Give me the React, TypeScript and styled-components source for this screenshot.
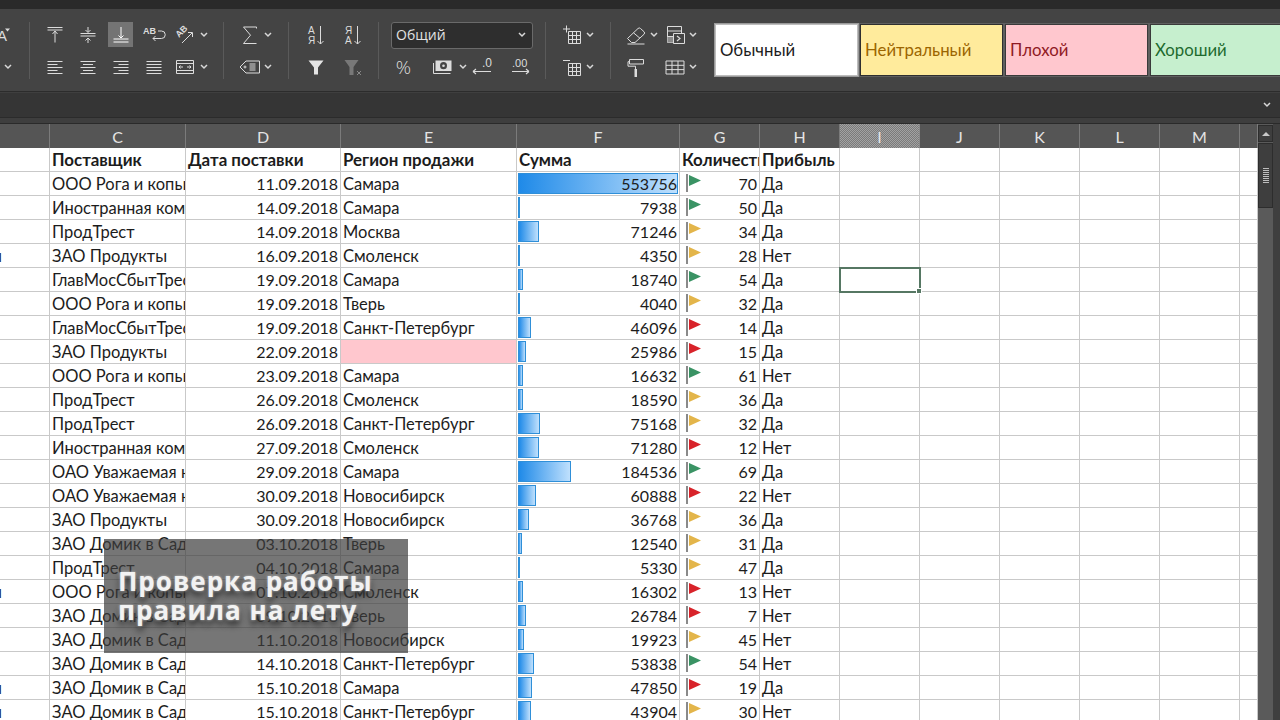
import React from 'react';
import styled, { createGlobalStyle } from 'styled-components';

const GlobalStyle = createGlobalStyle`
  html, body {
    margin: 0;
    height: 720px;
    overflow: hidden;
    background: #3f3f3f;
    font-family: 'Lato', 'Open Sans', 'Liberation Sans', sans-serif;
  }
`;

const COLUMNS = '50px 136px 155px 176px 163px 80px 80px 80px 80px 80px 80px 80px 18px';
const MAX_SUM = 553756;

type Flag = 'g' | 'y' | 'r';
type Row = [string, string, string, string, number, number, Flag, string];

const rows: Row[] = [
  ['', 'ООО Рога и копыта', '11.09.2018', 'Самара', 553756, 70, 'g', 'Да'],
  ['', 'Иностранная компания', '14.09.2018', 'Самара', 7938, 50, 'g', 'Да'],
  ['', 'ПродТрест', '14.09.2018', 'Москва', 71246, 34, 'y', 'Да'],
  ['ы', 'ЗАО Продукты', '16.09.2018', 'Смоленск', 4350, 28, 'y', 'Нет'],
  ['', 'ГлавМосСбытТрест', '19.09.2018', 'Самара', 18740, 54, 'g', 'Да'],
  ['', 'ООО Рога и копыта', '19.09.2018', 'Тверь', 4040, 32, 'y', 'Да'],
  ['', 'ГлавМосСбытТрест', '19.09.2018', 'Санкт-Петербург', 46096, 14, 'r', 'Да'],
  ['', 'ЗАО Продукты', '22.09.2018', '', 25986, 15, 'r', 'Да'],
  ['', 'ООО Рога и копыта', '23.09.2018', 'Самара', 16632, 61, 'g', 'Нет'],
  ['', 'ПродТрест', '26.09.2018', 'Смоленск', 18590, 36, 'y', 'Да'],
  ['', 'ПродТрест', '26.09.2018', 'Санкт-Петербург', 75168, 32, 'y', 'Да'],
  ['', 'Иностранная компания', '27.09.2018', 'Смоленск', 71280, 12, 'r', 'Нет'],
  ['', 'ОАО Уважаемая компания', '29.09.2018', 'Самара', 184536, 69, 'g', 'Да'],
  ['', 'ОАО Уважаемая компания', '30.09.2018', 'Новосибирск', 60888, 22, 'r', 'Нет'],
  ['', 'ЗАО Продукты', '30.09.2018', 'Новосибирск', 36768, 36, 'y', 'Да'],
  ['', 'ЗАО Домик в Саду', '03.10.2018', 'Тверь', 12540, 31, 'y', 'Да'],
  ['', 'ПродТрест', '04.10.2018', 'Самара', 5330, 47, 'y', 'Да'],
  ['ы', 'ООО Рога и копыта', '07.10.2018', 'Смоленск', 16302, 13, 'r', 'Нет'],
  ['', 'ЗАО Домик в Саду', '09.10.2018', 'Тверь', 26784, 7, 'r', 'Нет'],
  ['', 'ЗАО Домик в Саду', '11.10.2018', 'Новосибирск', 19923, 45, 'y', 'Нет'],
  ['', 'ЗАО Домик в Саду', '14.10.2018', 'Санкт-Петербург', 53838, 54, 'g', 'Нет'],
  ['ы', 'ЗАО Домик в Саду', '15.10.2018', 'Самара', 47850, 19, 'r', 'Да'],
  ['ы', 'ЗАО Домик в Саду', '15.10.2018', 'Санкт-Петербург', 43904, 30, 'y', 'Нет'],
];

const flagColors: Record<Flag, string> = { g: '#3a9364', y: '#e3b54a', r: '#d8232a' };

const Page = styled.div`
  width: 1280px;
  height: 720px;
  position: relative;
  overflow: hidden;
  display: flex;
  flex-direction: column;
`;

const TopStrip = styled.div`
  height: 9px;
  background: #2a2a2a;
`;

const Ribbon = styled.div`
  height: 83px;
  box-sizing: border-box;
  padding-top: 13px;
  display: flex;
  background: #444444;
  border-bottom: 1px solid #2c2c2c;
  overflow: hidden;
`;

const Group = styled.div<{ $w: number; $pad?: number }>`
  width: ${(p) => p.$w}px;
  flex: none;
  box-sizing: border-box;
  padding-left: ${(p) => p.$pad ?? 0}px;
  display: flex;
  flex-direction: column;
  gap: 7px;
`;

const Sep = styled.div`
  width: 1px;
  flex: none;
  height: 57px;
  background: #5a5a5a;
`;

const ToolRow = styled.div`
  display: flex;
  height: 25px;
  align-items: center;
`;

const Tool = styled.div<{ $w: number; $ml?: number; $active?: boolean }>`
  width: ${(p) => p.$w}px;
  height: 25px;
  margin-left: ${(p) => p.$ml ?? 0}px;
  flex: none;
  display: flex;
  align-items: center;
  justify-content: center;
  position: relative;
  background: ${(p) => (p.$active ? 'linear-gradient(#747474, #747474) center / 25px 25px no-repeat' : 'none')};
  svg {
    display: block;
    overflow: visible;
    flex: none;
  }
`;

const Stroke = styled.svg.attrs({ width: 24, height: 24, viewBox: '0 0 24 24', fill: 'none' })`
  stroke: #dcdcdc;
  stroke-width: 1;
  text {
    fill: #dcdcdc;
    stroke: none;
    font-family: 'Liberation Sans', sans-serif;
  }
`;

const Chevron = () => (
  <svg width="8" height="6" viewBox="0 0 8 6" fill="none" stroke="#d8d8d8" strokeWidth="1.5">
    <path d="M1 1l3 3 3-3" />
  </svg>
);

const ChevronTool = ({ ml }: { ml?: number }) => (
  <Tool $w={10} $ml={ml}>
    <Chevron />
  </Tool>
);

const FontGrow = () => (
  <Stroke>
    <text x="14" y="18" fontSize="15" textAnchor="end">A</text>
    <path d="M12 5.500h5l-2.500 3z" fill="#dcdcdc" stroke="none" />
  </Stroke>
);
const AlignTop = () => (
  <Stroke>
    <path d="M4.500 4.500h15M4.500 7h15M12 8v11.500M9.500 11l2.500-3 2.500 3" />
  </Stroke>
);
const AlignMiddle = () => (
  <Stroke>
    <path d="M4.500 10.500h15M4.500 13h15M12 4v5M12 15v5M9.500 7l2.500 2.500L14.500 7M9.500 17.500l2.500-2.500 2.500 2.500" />
  </Stroke>
);
const AlignBottom = () => (
  <Stroke strokeWidth="1.2">
    <path d="M4.500 16h15M4.500 19h15M12 4v11M9.500 12.500l2.500 2.500 2.500-2.500" stroke="#fff" />
  </Stroke>
);
const Wrap = () => (
  <Stroke>
    <text x="1" y="11" fontSize="9" fontWeight="700">AB</text>
    <path d="M16 8h3.500a3 3 0 0 1 0 7.500H11M13.500 13l-2.500 2.500 2.500 2.500" />
  </Stroke>
);
const Orientation = () => (
  <Stroke>
    <text x="0" y="0" fontSize="9" fontWeight="700" transform="translate(6 15) rotate(-45)">AB</text>
    <path d="M9 20l10-10M15 9.500h4.500V14" />
  </Stroke>
);
const lines = (widths: number[], anchor: 'l' | 'c' | 'r') =>
  widths
    .map((w, i) => {
      const x = anchor === 'l' ? 4.5 : anchor === 'r' ? 19.5 - w : 12 - w / 2;
      return `M${x} ${6.5 + i * 3}h${w}`;
    })
    .join('');
const AlignLeft = () => (
  <Stroke><path d={lines([15, 10, 15, 10, 15], 'l')} /></Stroke>
);
const AlignCenter = () => (
  <Stroke><path d={lines([15, 10, 15, 10, 15], 'c')} /></Stroke>
);
const AlignRight = () => (
  <Stroke><path d={lines([15, 10, 15, 10, 15], 'r')} /></Stroke>
);
const Justify = () => (
  <Stroke><path d={lines([15, 15, 15, 15, 15], 'l')} /></Stroke>
);
const Merge = () => (
  <Stroke>
    <path d="M3.500 5.500h17v13h-17zM3.500 8.500h17M3.500 15.500h17M6 12h4M7.500 10.500L6 12l1.500 1.500M18 12h-4M16.500 10.500L18 12l-1.500 1.500" />
  </Stroke>
);
const Sigma = () => (
  <Stroke strokeWidth="1.2">
    <path d="M18.500 5.500v-1.500h-13l7 8.200-7 8.300h13" />
  </Stroke>
);
const Tag = () => (
  <Stroke>
    <path d="M8 6h13.500v12H8l-6-6zM11.500 9h6M11.500 11h6M11.500 13h6M11.500 15h6" />
    <circle cx="7" cy="12" r="1" />
  </Stroke>
);
const SortLabel = ({ top, bottom }: { top: string; bottom: string }) => (
  <Stroke>
    <text x="4" y="11" fontSize="10">{top}</text>
    <text x="4" y="21" fontSize="10">{bottom}</text>
    <path d="M16.500 3v18M13.500 18l3 3 3-3" />
  </Stroke>
);
const Funnel = () => (
  <Stroke>
    <path d="M4.500 5.500h15l-5.500 7v7h-4v-7z" fill="#e4e4e4" stroke="none" />
  </Stroke>
);
const FunnelClear = () => (
  <Stroke>
    <path d="M3.500 5h14l-5 7v8h-4v-8z" fill="#787878" stroke="none" />
    <path d="M16 16l4 4M20 16l-4 4" stroke="#8a8a8a" />
  </Stroke>
);
const Money = () => (
  <Stroke>
    <path d="M3.500 8v10.500h17" />
    <path d="M5.500 5.500h16v10.500h-16z" fill="#dcdcdc" stroke="none" />
    <ellipse cx="13.500" cy="10.700" rx="3.500" ry="3.600" fill="#444" stroke="none" />
    <circle cx="13.500" cy="10.700" r="1.300" fill="#dcdcdc" stroke="none" />
  </Stroke>
);
const DecLess = () => (
  <Stroke>
    <text x="12" y="12" fontSize="12">.0</text>
    <path d="M3 16.500h18M3 16.500l3-2.500M3 16.500l3 2.500" strokeWidth="1.1" />
  </Stroke>
);
const DecMore = () => (
  <Stroke>
    <text x="3" y="12" fontSize="11">.00</text>
    <path d="M3 16.500h17M20 16.500l-3-2.500M20 16.500l-3 2.500" strokeWidth="1.1" />
  </Stroke>
);
const CellGrid = () => <path d="M8.500 8.500h12v12h-12zM12.500 8.500v12M16.500 8.500v12M8.500 12.500h12M8.500 16.500h12" />;
const TableAdd = () => (
  <Stroke>
    <CellGrid />
    <path d="M3 6h7M6.500 2.500v7" />
  </Stroke>
);
const TableRemove = () => (
  <Stroke>
    <CellGrid />
    <path d="M3 5.500h7" />
  </Stroke>
);
const Eraser = () => (
  <Stroke>
    <path d="M3.500 15.500L14 5.500a1.800 1.800 0 0 1 2.500 0l3.500 3.200a1.800 1.800 0 0 1 0 2.600L11 19.500H7.500zM9.500 9.800l6.500 5.500M3.500 21h17" />
  </Stroke>
);
const CondFormat = () => (
  <Stroke>
    <path d="M4.500 3.500h14v16h-14zM4.500 8h14M4.500 13.500h14" />
    <path d="M4.500 14h6v5.500h-6z" fill="#8a8a8a" stroke="none" />
    <path d="M10.500 10.500h11v10h-11z" fill="#444" />
    <path d="M14 13l3 2.500-3 2.500" strokeWidth="1.2" />
  </Stroke>
);
const Roller = () => (
  <Stroke>
    <path d="M5.500 4.500h14v4.500h-14zM5.500 6.700h-1.500v4.500h7.500v3" />
    <path d="M10.500 14h2.500v8h-2.500z" fill="#dcdcdc" stroke="none" />
  </Stroke>
);
const TableFull = () => (
  <Stroke>
    <path d="M3 6h18v13H3zM3 10.300h18M3 14.600h18M9 6v13M15 6v13" />
  </Stroke>
);

const FormatSelect = styled.div`
  width: 142px;
  height: 27px;
  box-sizing: border-box;
  margin-bottom: -2px;
  padding: 0 6px 2px 4px;
  display: flex;
  align-items: center;
  justify-content: space-between;
  background: #2e2e2e;
  border: 1px solid #6a6a6a;
  border-radius: 3px;
  color: #e2e2e2;
  font: 14px 'Open Sans', sans-serif;
`;

const Percent = styled.span`
  color: #dcdcdc;
  font: 300 19px 'Open Sans', sans-serif;
`;

const StyleCard = styled.div<{ $bg: string; $fg: string; $edge: string; $ring?: string }>`
  width: 145px;
  height: 54px;
  flex: none;
  margin-top: 1px;
  box-sizing: border-box;
  padding: 0 0 2px 4px;
  display: flex;
  align-items: center;
  background: ${(p) => p.$bg};
  color: ${(p) => p.$fg};
  border: 2px solid ${(p) => p.$edge};
  outline: 1px solid ${(p) => p.$ring ?? '#5f5f5f'};
  outline-offset: -1px;
  font-size: 16.8px;
`;

const FormulaBar = styled.div`
  height: 24px;
  margin-top: 1px;
  padding-right: 9px;
  display: flex;
  align-items: center;
  justify-content: flex-end;
  background: #353535;
  border-bottom: 1px solid #2b2b2b;
`;

const Gap = styled.div`
  height: 5px;
  background: #3e3e3e;
  border-bottom: 1px solid #2a2a2a;
`;

const Sheet = styled.div`
  flex: 1;
  min-height: 0;
  display: flex;
`;

const Grid = styled.div`
  width: 1258px;
  flex: none;
  background: #fff;
`;

const HeaderRow = styled.div`
  display: grid;
  grid-template-columns: ${COLUMNS};
  height: 24px;
  background: #555555;
`;

const HeaderCell = styled.div<{ $selected?: boolean }>`
  display: flex;
  align-items: center;
  justify-content: center;
  border-right: 1px solid #7b7b7b;
  color: #e4e4e4;
  font-size: 16px;
  ${(p) =>
    p.$selected &&
    `background: repeating-conic-gradient(#7a7a7a 0 25%, #a2a2a2 0 50%) 0 0 / 2px 2px; border-right-color: #8a8a8a;`}
`;

const DataRow = styled.div`
  display: grid;
  grid-template-columns: ${COLUMNS};
  height: 24px;
`;

const Cell = styled.div<{ $right?: boolean; $bold?: boolean; $bg?: string; $selected?: boolean }>`
  position: relative;
  box-sizing: border-box;
  height: 24px;
  line-height: ${(p) => (p.$right ? 23 : p.$bold ? 24 : 25)}px;
  padding: 0 2px;
  overflow: ${(p) => (p.$selected ? 'visible' : 'hidden')};
  white-space: nowrap;
  text-align: ${(p) => (p.$right ? 'right' : 'left')};
  font-size: ${(p) => (p.$bold ? 16.9 : p.$right ? 16 : 16.5)}px;
  font-weight: ${(p) => (p.$bold ? 700 : 400)};
  color: #1c1c1c;
  background: ${(p) => p.$bg ?? '#fff'};
  border-right: 1px solid #c9c9c9;
  border-bottom: 1px solid #c9c9c9;
  ${(p) =>
    p.$selected &&
    `outline: 2px solid #567763; outline-offset: -1px; z-index: 1;`}
`;

const Handle = styled.span`
  position: absolute;
  right: -3px;
  bottom: -3px;
  width: 6px;
  height: 6px;
  background: #567763;
  border: 1px solid #fff;
  box-sizing: border-box;
`;

const Stub = styled(Cell)`
  padding: 0;
  text-indent: -10px;
`;

const Bar = styled.div`
  position: absolute;
  left: 1px;
  top: 1px;
  bottom: 1px;
  box-sizing: border-box;
  min-width: 2px;
  background: linear-gradient(90deg, #1f8ae8, #bfe0fd);
  border: 1px solid #2f8fd8;
`;

const SumValue = styled.span`
  position: relative;
`;

const FlagIcon = styled.svg.attrs({ width: 16, height: 18, viewBox: '0 0 16 18' })`
  position: absolute;
  left: 6px;
  top: 2px;
`;

const Scroll = styled.div`
  width: 15px;
  flex: none;
  display: flex;
  flex-direction: column;
  background: #5a5a5a;
`;

const ScrollButton = styled.div`
  height: 17px;
  margin-top: 1px;
  box-sizing: border-box;
  border: 1px solid #2d2d2d;
  background: #3e3e3e;
  display: flex;
  align-items: center;
  justify-content: center;
  &::before {
    content: '';
    border: 4px solid transparent;
    border-top: 0;
    border-bottom: 4px solid #c8c8c8;
  }
`;

const ScrollThumb = styled.div`
  height: 65px;
  margin-top: 1px;
  box-sizing: border-box;
  border: 1px solid #2d2d2d;
  background: #3e3e3e;
  display: flex;
  align-items: center;
  justify-content: center;
  &::before {
    content: '';
    width: 6px;
    height: 15px;
    background: repeating-linear-gradient(#bdbdbd 0 1px, transparent 1px 2px);
  }
`;

const Caption = styled.div`
  position: absolute;
  left: 104px;
  top: 539px;
  width: 304px;
  height: 114px;
  box-sizing: border-box;
  padding: 28px 0 0 14px;
  background: rgba(60, 60, 60, 0.7);
  color: #f2f2f2;
  font: 700 26px/29px 'Open Sans', sans-serif;
  letter-spacing: 1px;
  text-shadow: 0 0 3px rgba(255, 255, 255, 0.6), 0 5px 6px rgba(30, 30, 30, 0.9);
`;

const headers = ['C', 'D', 'E', 'F', 'G', 'H', 'I', 'J', 'K', 'L', 'M'];
const titles = ['Поставщик', 'Дата поставки', 'Регион продажи', 'Сумма', 'Количество', 'Прибыль'];
const emptyCols = [0, 1, 2, 3, 4];

const App = () => (
  <Page>
    <GlobalStyle />
    <TopStrip />
    <Ribbon>
      <Group $w={29}>
        <ToolRow>
          <Tool $w={10}><FontGrow /></Tool>
        </ToolRow>
        <ToolRow>
          <ChevronTool ml={3} />
        </ToolRow>
      </Group>
      <Sep />
      <Group $w={193} $pad={8}>
        <ToolRow>
          <Tool $w={33}><AlignTop /></Tool>
          <Tool $w={33}><AlignMiddle /></Tool>
          <Tool $w={33} $active><AlignBottom /></Tool>
          <Tool $w={33}><Wrap /></Tool>
          <Tool $w={29}><Orientation /></Tool>
          <ChevronTool />
        </ToolRow>
        <ToolRow>
          <Tool $w={33}><AlignLeft /></Tool>
          <Tool $w={33}><AlignCenter /></Tool>
          <Tool $w={33}><AlignRight /></Tool>
          <Tool $w={33}><Justify /></Tool>
          <Tool $w={29}><Merge /></Tool>
          <ChevronTool />
        </ToolRow>
      </Group>
      <Sep />
      <Group $w={64} $pad={13}>
        <ToolRow>
          <Tool $w={26}><Sigma /></Tool>
          <ChevronTool />
        </ToolRow>
        <ToolRow>
          <Tool $w={26}><Tag /></Tool>
          <ChevronTool />
        </ToolRow>
      </Group>
      <Sep />
      <Group $w={89} $pad={8}>
        <ToolRow>
          <Tool $w={37}><SortLabel top="А" bottom="Я" /></Tool>
          <Tool $w={37}><SortLabel top="Я" bottom="А" /></Tool>
        </ToolRow>
        <ToolRow>
          <Tool $w={37}><Funnel /></Tool>
          <Tool $w={37}><FunnelClear /></Tool>
        </ToolRow>
      </Group>
      <Sep />
      <Group $w={166} $pad={12}>
        <ToolRow>
          <FormatSelect>
            Общий
            <Chevron />
          </FormatSelect>
        </ToolRow>
        <ToolRow>
          <Tool $w={25}><Percent>%</Percent></Tool>
          <Tool $w={32} $ml={10}><Money /></Tool>
          <ChevronTool />
          <Tool $w={24} $ml={2}><DecLess /></Tool>
          <Tool $w={24} $ml={15}><DecMore /></Tool>
        </ToolRow>
      </Group>
      <Sep />
      <Group $w={64} $pad={13}>
        <ToolRow>
          <Tool $w={26}><TableAdd /></Tool>
          <ChevronTool />
        </ToolRow>
        <ToolRow>
          <Tool $w={26}><TableRemove /></Tool>
          <ChevronTool />
        </ToolRow>
      </Group>
      <Sep />
      <Group $w={103} $pad={12}>
        <ToolRow>
          <Tool $w={25}><Eraser /></Tool>
          <ChevronTool ml={1} />
          <Tool $w={25} $ml={3}><CondFormat /></Tool>
          <ChevronTool ml={1} />
        </ToolRow>
        <ToolRow>
          <Tool $w={25}><Roller /></Tool>
          <Tool $w={25} $ml={14}><TableFull /></Tool>
          <ChevronTool ml={1} />
        </ToolRow>
      </Group>
      <StyleCard $bg="#fff" $fg="#1c1c1c" $edge="#bdbdbd" $ring="#9a9a9a">Обычный</StyleCard>
      <StyleCard $bg="#ffeb9c" $fg="#9c6500" $edge="#2f2f2f">Нейтральный</StyleCard>
      <StyleCard $bg="#ffc7ce" $fg="#8f1a24" $edge="#3a3a3a">Плохой</StyleCard>
      <StyleCard $bg="#c6efce" $fg="#1e6b2e" $edge="#3a3a3a">Хороший</StyleCard>
    </Ribbon>
    <FormulaBar>
      <Chevron />
    </FormulaBar>
    <Gap />
    <Sheet>
      <Grid>
        <HeaderRow>
          <HeaderCell />
          {headers.map((h) => (
            <HeaderCell key={h} $selected={h === 'I'}>{h}</HeaderCell>
          ))}
          <HeaderCell />
        </HeaderRow>
        <DataRow>
          <Cell />
          {titles.map((t) => (
            <Cell key={t} $bold>{t}</Cell>
          ))}
          {emptyCols.map((c) => <Cell key={c} />)}
          <Cell />
        </DataRow>
        {rows.map((r, i) => (
          <DataRow key={i}>
            <Stub>{r[0]}</Stub>
            <Cell>{r[1]}</Cell>
            <Cell $right>{r[2]}</Cell>
            <Cell $bg={r[3] ? undefined : '#ffc7ce'}>{r[3]}</Cell>
            <Cell $right>
              <Bar style={{ width: (r[4] / MAX_SUM) * 160 }} />
              <SumValue>{r[4]}</SumValue>
            </Cell>
            <Cell $right>
              <FlagIcon>
                <rect x="0" y="0" width="2" height="18" fill="#8a8a8a" />
                <path d="M3 1l12 5.500-12 5.500z" fill={flagColors[r[6]]} />
              </FlagIcon>
              {r[5]}
            </Cell>
            <Cell>{r[7]}</Cell>
            {emptyCols.map((c) => (
              <Cell key={c} $selected={i === 4 && c === 0}>
                {i === 4 && c === 0 && <Handle />}
              </Cell>
            ))}
            <Cell />
          </DataRow>
        ))}
      </Grid>
      <Scroll>
        <ScrollButton />
        <ScrollThumb />
      </Scroll>
    </Sheet>
    <Caption>
      Проверка работы
      <br />
      правила на лету
    </Caption>
  </Page>
);

export default App;
